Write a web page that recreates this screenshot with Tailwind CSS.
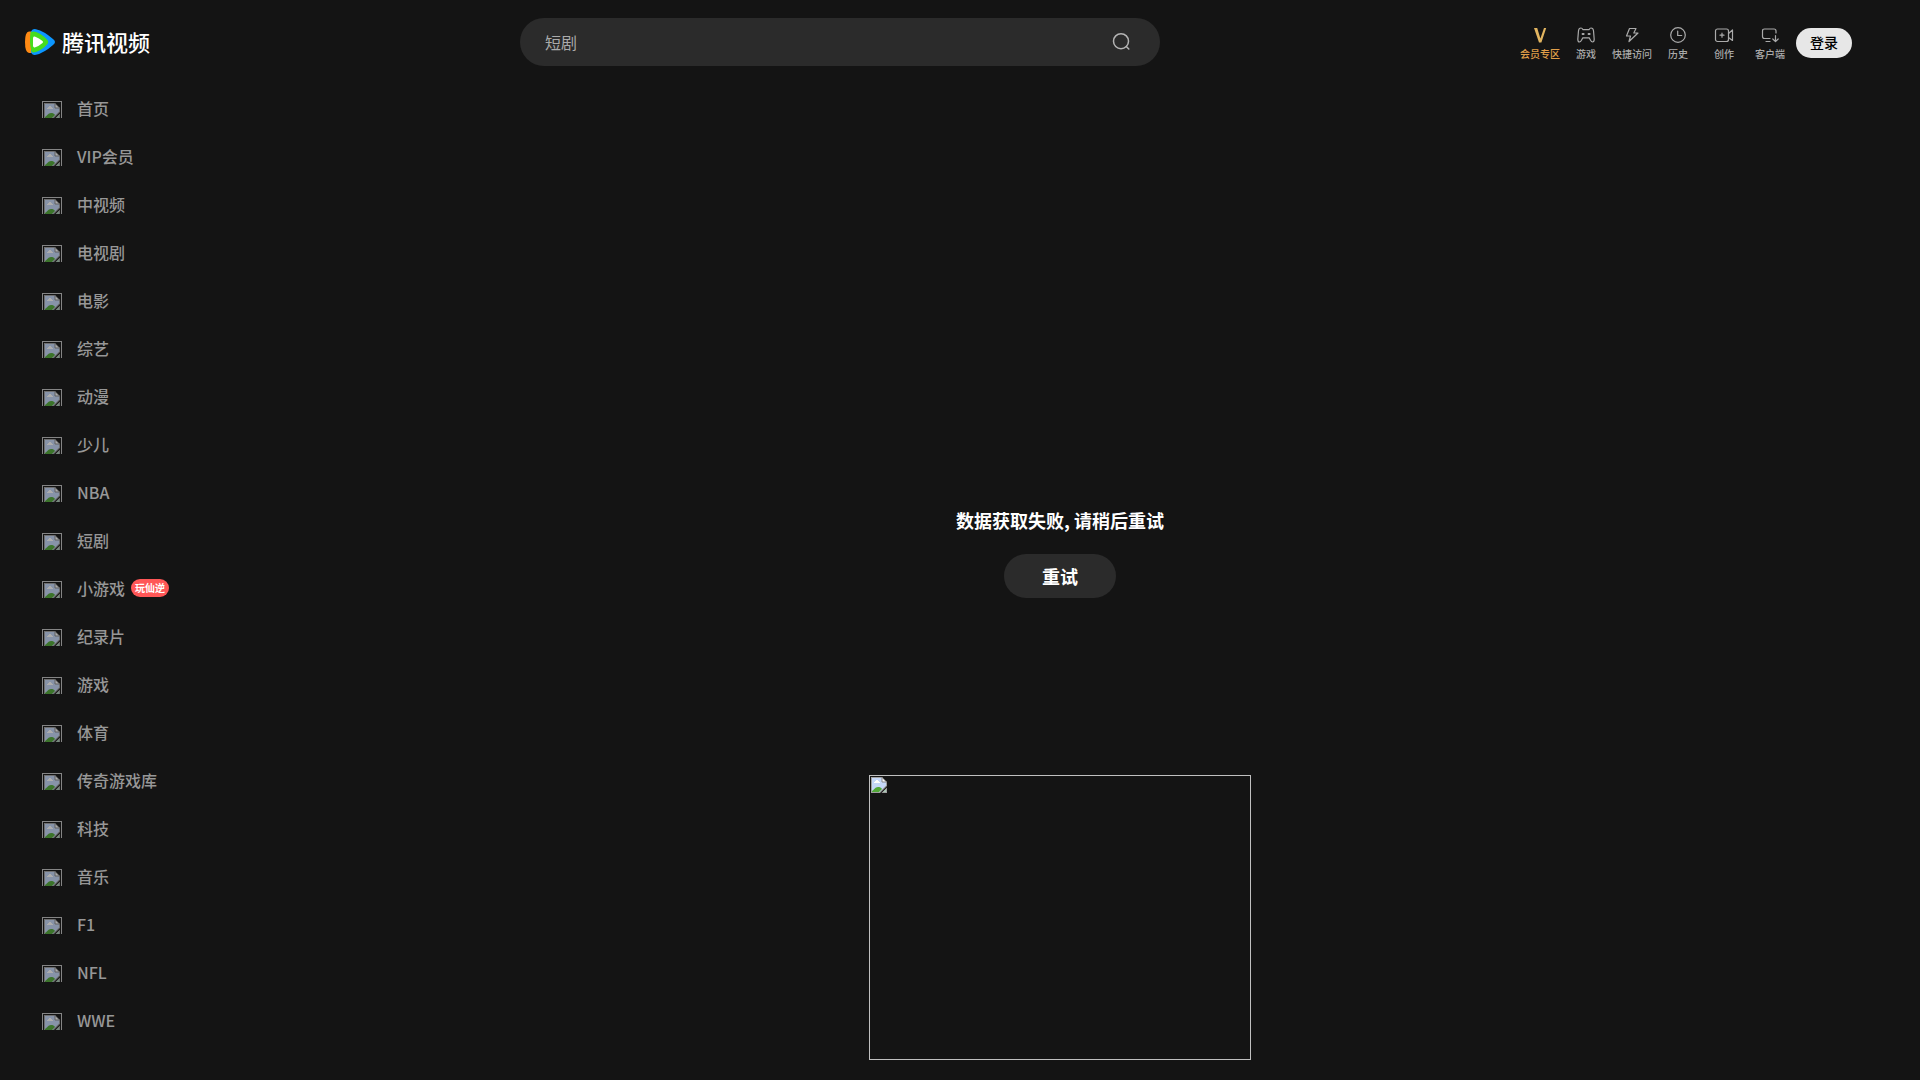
<!DOCTYPE html>
<html lang="zh-CN">
<head>
<meta charset="utf-8">
<meta name="viewport" content="width=device-width, initial-scale=1">
<title>腾讯视频</title>
<script src="https://cdn.jsdelivr.net/npm/@tailwindcss/browser@4"></script>
</head>
<body class="flex min-h-screen flex-col bg-[#141414] font-['Noto_Sans_CJK_SC',sans-serif] text-white">
<svg class="hidden" aria-hidden="true">
  <symbol id="missing" viewBox="0 0 16 16">
    <path d="M0 0h11l5 5v4L9 16H0z" fill="#a0a0a0"/>
    <path d="M1 1h10v4h4v3.500L8.500 15H1z" fill="#c5d7f8"/>
    <path d="M3 6V5h1V4h1V3h2v1h1v1h1v1z" fill="#fff"/>
    <path d="M1 15v-1c2-1 3-4 6-4 2 0 3 .500 4 2L8 15z" fill="#52a838"/>
    <path d="M11 1l4 4h-4z" fill="#fff"/><path d="M11 0v5h5" fill="none" stroke="#888"/>
    <path d="M16 10.500V16h-5.500z" fill="#a0a0a0"/><path d="M15 12v3h-3z" fill="#a9cbb6"/>
  </symbol>
</svg>
<header class="flex h-[84px] shrink-0 items-center">
  <div class="w-[520px] shrink-0 pl-[25px]">
    <a href="#" class="flex w-fit items-center gap-[7px] text-[22px] leading-7 font-medium">
      <svg class="h-7 w-[30px]" viewBox="0 0 30 28">
        <path d="M4 3.500Q0 3.500 0 14t4 11h5V3.500z" fill="#ff8a14"/>
        <path d="M6 4Q7 .5 11 1.200 19 3 28 11q4 3 0 6-9 8-17 9.800-4 .7-5-2.800z" fill="#0c96ff"/>
        <path d="M5.500 4.200Q8 3 11 4q6 2 11 7.500 2.500 2.500 0 5Q17 22 11 24q-3 1-4.500-.5Q4 14 5.500 4.200z" fill="#46dc1e"/>
        <path d="M8 10q.3-2 2.300-1.300Q14 10 17.500 13q1.200 1 0 2-3.500 3-7.200 4.300Q8.300 20 8 18z" fill="#fff"/>
      </svg>
      <span class="pb-0.5">腾讯视频</span>
    </a>
  </div>
  <form class="flex h-12 max-w-[640px] flex-1 items-center rounded-full bg-[#2b2b2b] pr-[29px] pl-[25px]">
    <input type="search" aria-label="搜索" placeholder="短剧" class="min-w-0 flex-1 bg-transparent text-base text-[#aaa] outline-none placeholder:text-[#aaa]">
    <button type="button" aria-label="搜索" class="text-[#b4b4b4]">
      <svg class="size-5" viewBox="0 0 20 20" fill="none" stroke="currentColor" stroke-width="1.500" stroke-linecap="round"><circle cx="10" cy="9.200" r="7.500"/><path d="M15.300 14.500l2.500 2.500"/></svg>
    </button>
  </form>
  <nav class="mr-[68px] ml-auto flex items-center pt-0.5 text-[10px] leading-3 font-medium text-[#aaa]">
    <a href="#" class="flex w-[46px] flex-col items-center gap-[3px] pb-0.5 text-[#e2a04a]">
      <svg class="size-5" viewBox="0 0 20 20"><path d="M4 3h3.200l3.200 10.500L14 3h2.200l-4.800 14.500H9z" fill="#e2b560"/></svg>会员专区</a>
    <a href="#" class="flex w-[46px] flex-col items-center gap-[3px] pb-0.5">
      <svg class="size-5" viewBox="0 0 20 20" fill="none" stroke="currentColor" stroke-width="1.200" stroke-linejoin="round" stroke-linecap="round"><path d="M5 3q1 0 2 1.700h6Q14 3 15 3q2.200 0 2.500 2.800l.7 8.500q0 2.700-1.700 2.700-1 0-2-1.700l-1.300-2.500H6.800l-1.300 2.500q-1 1.700-2 1.700-1.700 0-1.700-2.700l.7-8.500Q2.800 3 5 3z"/><path d="M6.500 9h1.200M12.500 9h1.200" stroke-width="1.800"/></svg>游戏</a>
    <a href="#" class="flex w-[46px] flex-col items-center gap-[3px] pb-0.5">
      <svg class="size-5" viewBox="0 0 20 20" fill="none" stroke="currentColor" stroke-width="1.200" stroke-linejoin="round"><path d="M7.500 3.500H14L11.800 8h4.200L7 16.500l1.500-5.500H4.500z"/></svg>快捷访问</a>
    <a href="#" class="flex w-[46px] flex-col items-center gap-[3px] pb-0.5">
      <svg class="size-5" viewBox="0 0 20 20" fill="none" stroke="currentColor" stroke-width="1.200" stroke-linecap="round"><circle cx="10" cy="10" r="7.300"/><path d="M9.700 6v4.500h4"/></svg>历史</a>
    <a href="#" class="flex w-[46px] flex-col items-center gap-[3px] pb-0.5">
      <svg class="size-5" viewBox="0 0 20 20" fill="none" stroke="currentColor" stroke-width="1.200" stroke-linejoin="round" stroke-linecap="round"><rect x="1.500" y="4" width="13" height="12.500" rx="2"/><path d="M14.500 8.500L18.500 5v10.500l-4-3M6 10.200h4M8 8.200v4"/></svg>创作</a>
    <a href="#" class="flex w-[46px] flex-col items-center gap-[3px] pb-0.5">
      <svg class="size-5" viewBox="0 0 20 20" fill="none" stroke="currentColor" stroke-width="1.200" stroke-linejoin="round" stroke-linecap="round"><path d="M10 13.500H4.500Q2.500 13.500 2.500 11.500V6Q2.500 4 4.500 4h9.500q2 0 2 2v2M6 16.500h4M15.500 10.500v6M12.800 14l2.700 2.700L18.200 14"/></svg>客户端</a>
    <button type="button" class="ml-[3px] h-[30px] w-14 rounded-full bg-[#e7e7e7] pb-0.5 text-sm font-medium text-black">登录</button>
  </nav>
</header>
<div class="flex flex-1">
  <nav class="w-[200px] shrink-0 pt-px text-base font-medium text-[#979797]">
    <ul id="channels"></ul>
  </nav>
  <main class="flex flex-1 flex-col items-center pt-[423px]">
    <p class="text-lg leading-[26px] font-bold">数据获取失败, 请稍后重试</p>
    <button type="button" class="mt-[21px] h-11 w-28 rounded-full bg-[#2b2b2b] text-lg font-bold">重试</button>
    <div role="img" aria-label="图片" class="mt-[177px] h-[285px] w-[382px] border border-[#c0c0c0] p-px">
      <svg class="size-4"><use href="#missing"/></svg>
    </div>
  </main>
</div>
<script>
  const channels = ['首页','VIP会员','中视频','电视剧','电影','综艺','动漫','少儿','NBA','短剧','小游戏','纪录片','游戏','体育','传奇游戏库','科技','音乐','F1','NFL','WWE'];
  const badges = { '小游戏': '玩仙逆' };
  document.getElementById('channels').innerHTML = channels.map(name => `
    <li><a href="#" class="flex h-12 items-center pl-[42px]">
      <span class="mr-[15px] h-[17px] w-5 overflow-hidden border border-b-0 border-[#c0c0c0] pt-px pl-px opacity-65"><svg class="size-4"><use href="#missing"/></svg></span>
      <span class="pb-0.5">${name}</span>
      ${badges[name] ? `<span class="mb-[3px] ml-1.5 flex h-[18px] items-center rounded-full bg-[#ff5757] px-1 pb-px text-[10px] font-bold text-white">${badges[name]}</span>` : ''}
    </a></li>`).join('');
</script>
</body>
</html>
